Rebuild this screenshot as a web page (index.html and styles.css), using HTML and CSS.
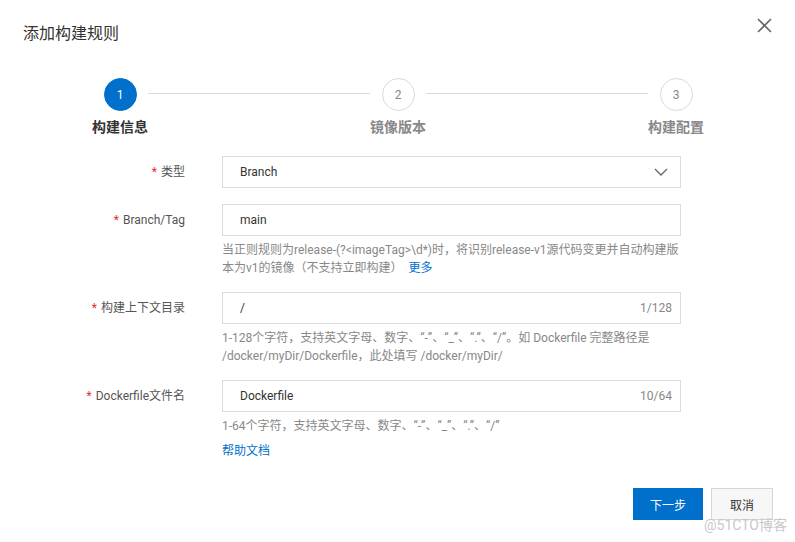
FILE: index.html
```html
<!DOCTYPE html>
<html lang="zh-CN">
<head>
<meta charset="utf-8">
<title>添加构建规则</title>
<link rel="stylesheet" href="styles.css">
</head>
<body>
<div class="dialog">
  <div class="header">
    <h1 class="title">添加构建规则</h1>
    <span class="close" aria-label="关闭">
      <svg width="15" height="15" viewBox="0 0 15 15"><path d="M1 1L14 14M14 1L1 14" stroke="#666" stroke-width="1.6" fill="none"/></svg>
    </span>
  </div>

  <div class="steps">
    <div class="step active">
      <div class="dot">1</div>
      <div class="step-label">构建信息</div>
    </div>
    <div class="step-line"></div>
    <div class="step">
      <div class="dot">2</div>
      <div class="step-label">镜像版本</div>
    </div>
    <div class="step-line"></div>
    <div class="step">
      <div class="dot">3</div>
      <div class="step-label">构建配置</div>
    </div>
  </div>

  <div class="form">
    <div class="row">
      <div class="label"><span class="req">*</span>类型</div>
      <div class="field">
        <div class="input select">
          <span class="value">Branch</span>
          <svg class="chev" width="14" height="8" viewBox="0 0 14 8"><path d="M1 1L7 7L13 1" stroke="#666" stroke-width="1.3" fill="none"/></svg>
        </div>
      </div>
    </div>

    <div class="row">
      <div class="label"><span class="req">*</span>Branch/Tag</div>
      <div class="field">
        <div class="input"><span class="value">main</span></div>
        <div class="help">当正则规则为release-(?&lt;imageTag&gt;\d*)时，将识别release-v1源代码变更并自动构建版本为v1的镜像（不支持立即构建）<a class="link more">更多</a></div>
      </div>
    </div>

    <div class="row">
      <div class="label"><span class="req">*</span>构建上下文目录</div>
      <div class="field">
        <div class="input"><span class="value">/</span><span class="count">1/128</span></div>
        <div class="help">1-128个字符，支持英文字母、数字、“-”、“_”、“.”、“/”。如 Dockerfile 完整路径是 /docker/myDir/Dockerfile，此处填写 /docker/myDir/</div>
      </div>
    </div>

    <div class="row">
      <div class="label"><span class="req">*</span>Dockerfile文件名</div>
      <div class="field">
        <div class="input"><span class="value">Dockerfile</span><span class="count">10/64</span></div>
        <div class="help">1-64个字符，支持英文字母、数字、“-”、“_”、“.”、“/”</div>
        <div class="help-link"><a class="link">帮助文档</a></div>
      </div>
    </div>
  </div>

  <div class="footer">
    <button class="btn primary">下一步</button>
    <button class="btn">取消</button>
  </div>
  <div class="watermark">@51CTO博客</div>
</div>
</body>
</html>
```

FILE: styles.css
```css
* { box-sizing: border-box; }
html, body { margin: 0; padding: 0; background: #fff; }
body {
  font-family: Roboto, "Noto Sans CJK SC", sans-serif;
  color: #333;
  font-size: 12px;
}
.dialog {
  position: relative;
  width: 795px;
  height: 542px;
  padding: 0 22px 0 22px;
}
.header {
  display: flex;
  justify-content: space-between;
  align-items: flex-start;
  height: 78px;
}
.title {
  margin: 23px 0 0 1px;
  font-size: 16px;
  font-weight: normal;
  line-height: 22px;
  color: #333;
}
.close {
  margin: 18px 1px 0 0;
  width: 15px;
  height: 15px;
  display: block;
}
.close svg { display: block; }

.steps {
  display: flex;
  align-items: flex-start;
  padding-left: 82px;
  height: 78px;
}
.step {
  width: 32px;
  display: flex;
  flex-direction: column;
  align-items: center;
}
.dot {
  width: 33px;
  height: 33px;
  border-radius: 50%;
  border: 1px solid #d9d9d9;
  background: #fff;
  color: #888;
  display: flex;
  align-items: center;
  justify-content: center;
  font-size: 12px;
  flex: none;
}
.step.active .dot {
  background: #0070cc;
  border-color: #0070cc;
  color: #fff;
}
.step-label {
  margin-top: 6px;
  white-space: nowrap;
  font-size: 14px;
  font-weight: bold;
  line-height: 20px;
  color: #888;
}
.step.active .step-label { color: #333; }
.step-line {
  width: 222px;
  height: 1px;
  background: #d9d9d9;
  margin: 15px 12px 0 12px;
}

.form {
  display: flex;
  flex-direction: column;
}
.row {
  display: flex;
  align-items: flex-start;
  margin-bottom: 16px;
}
.row:nth-child(2) { margin-bottom: 15px; }
.row:nth-child(3) { margin-bottom: 15px; }
.label {
  width: 163px;
  text-align: right;
  line-height: 32px;
  color: #555;
  white-space: nowrap;
}
.req {
  color: #e62c2c;
  margin-right: 4px;
}
.field {
  margin-left: 37px;
  width: 459px;
}
.input {
  height: 32px;
  border: 1px solid #dcdcdc;
  display: flex;
  align-items: center;
  padding: 0 8px 0 17px;
  color: #333;
}
.input .value { flex: 1; }
.count { color: #888; }
.chev { margin-right: 4px; }
.help {
  margin-top: 5px;
  color: #888;
  line-height: 18px;
}
.link { color: #0070cc; text-decoration: none; }
.more {
  display: inline-block;
  line-height: 16px;
  vertical-align: top;
  margin: 1px 0 0 6px;
}
.help-link {
  margin-top: 7px;
  line-height: 18px;
}
.footer {
  display: flex;
  justify-content: flex-end;
  gap: 8px;
  margin-top: 12px;
}
.btn {
  height: 32px;
  font-family: inherit;
  font-size: 12px;
  border: 1px solid #d6d6d6;
  background: #f7f7f7;
  color: #333;
  padding: 0;
  width: 62px;
}
.btn.primary {
  width: 70px;
  background: #0070cc;
  border-color: #0070cc;
  color: #fff;
}
.watermark {
  position: absolute;
  right: 8px;
  bottom: 8px;
  font-size: 14px;
  color: #c8c8c8;
}
```
